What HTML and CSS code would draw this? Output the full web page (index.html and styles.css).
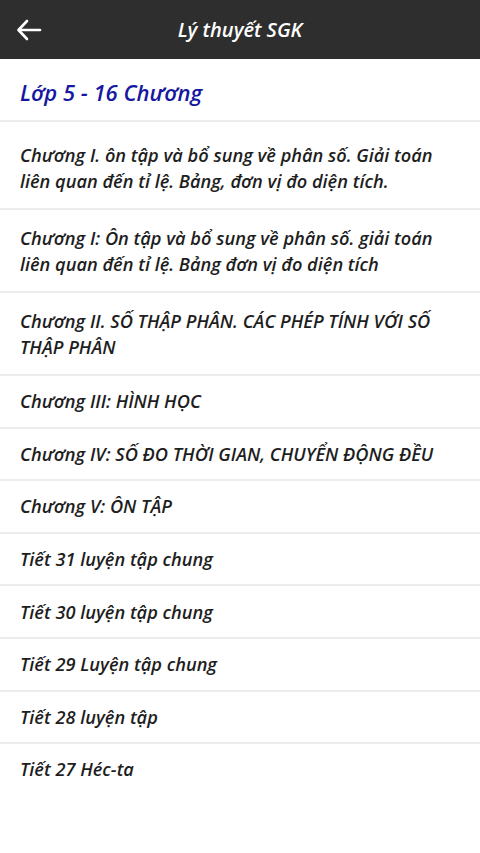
FILE: index.html
```html
<!DOCTYPE html>
<html lang="vi">
<head>
<meta charset="utf-8">
<title>Lý thuyết SGK</title>
<link rel="stylesheet" href="styles.css">
</head>
<body>
<header class="appbar">
  <button class="back" aria-label="Quay lại">
    <svg width="26" height="22" viewBox="0 0 26 22" fill="none" stroke="#fff" stroke-width="2.6" stroke-linecap="round" stroke-linejoin="round">
      <path d="M24 11H3"/>
      <path d="M11 2L2.5 11L11 20"/>
    </svg>
  </button>
  <h1 class="title">Lý thuyết SGK</h1>
</header>
<div class="subtitle">Lớp 5 - 16 Chương</div>
<ul class="list">
  <li class="item multi">Chương I. ôn tập và bổ sung về phân số. Giải toán liên quan đến tỉ lệ. Bảng, đơn vị đo diện tích.</li>
  <li class="item multi">Chương I: Ôn tập và bổ sung về phân số. giải toán liên quan đến tỉ lệ. Bảng đơn vị đo diện tích</li>
  <li class="item multi">Chương II. SỐ THẬP PHÂN. CÁC PHÉP TÍNH VỚI SỐ THẬP PHÂN</li>
  <li class="item">Chương III: HÌNH HỌC</li>
  <li class="item">Chương IV: SỐ ĐO THỜI GIAN, CHUYỂN ĐỘNG ĐỀU</li>
  <li class="item">Chương V: ÔN TẬP</li>
  <li class="item">Tiết 31 luyện tập chung</li>
  <li class="item">Tiết 30 luyện tập chung</li>
  <li class="item">Tiết 29 Luyện tập chung</li>
  <li class="item">Tiết 28 luyện tập</li>
  <li class="item last">Tiết 27 Héc-ta</li>
</ul>
</body>
</html>
```
FILE: styles.css
```css
* { box-sizing: border-box; }
html, body {
  margin: 0;
  padding: 0;
  background: #ffffff;
}
body {
  font-family: "Open Sans", Lato, "Noto Sans", sans-serif;
  font-style: italic;
  width: 480px;
}
.appbar {
  height: 59px;
  background: #2e2e2e;
  display: flex;
  align-items: center;
  position: relative;
}
.back {
  background: none;
  border: 0;
  padding: 0;
  margin-left: 16px;
  display: flex;
  align-items: center;
  height: 22px;
}
.title {
  position: absolute;
  left: 0;
  right: 0;
  top: 0;
  height: 59px;
  margin: 0;
  display: flex;
  align-items: center;
  justify-content: center;
  color: #ffffff;
  font-size: 20px;
  font-weight: 600;
  pointer-events: none;
}
.subtitle {
  height: 63px;
  padding: 18px 20px 0;
  font-size: 22px;
  line-height: 30px;
  font-weight: 600;
  color: #1717a0;
  border-bottom: 2px solid #ececec;
}
.list {
  list-style: none;
  margin: 0;
  padding: 5px 0 0;
}
.item {
  padding: 12.3px 24px 12.3px 20px;
  font-size: 18.2px;
  line-height: 26px;
  font-weight: 600;
  color: #1e1e1e;
  border-bottom: 2px solid #ececec;
}
.item.multi {
  padding: 15px 24px 14px 20px;
}
.item.last {
  border-bottom: 0;
}
```
